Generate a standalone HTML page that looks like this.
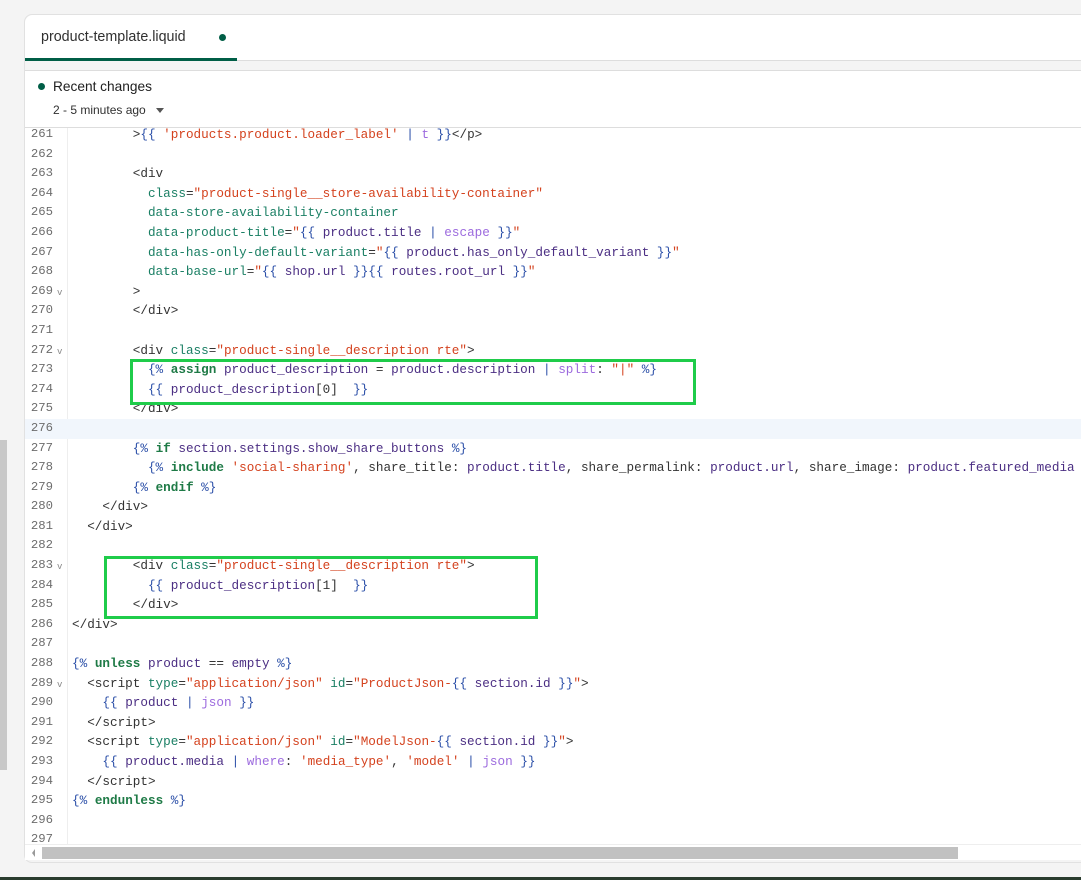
<!DOCTYPE html>
<html><head><meta charset="utf-8"><style>
*{margin:0;padding:0;box-sizing:border-box}
body{width:1081px;height:880px;background:#f4f4f4;position:relative;overflow:hidden;font-family:"Liberation Sans",sans-serif}
.panel{position:absolute;left:24px;top:14px;width:1070px;height:849px;background:#f4f4f4;border:1px solid #e1e1e1;border-right:none;border-radius:8px 0 0 8px}
.tabbar{position:absolute;left:0;top:0;right:0;height:46px;background:#fff;border-bottom:1px solid #ddd;border-radius:8px 0 0 0}
.tab{position:absolute;left:0;top:0;width:212px;height:46px;border-bottom:3px solid #005e46;font-size:14.3px;color:#303030;padding:14px 0 0 16px}
.tab .dot{position:absolute;left:194px;top:19px;width:7px;height:7px;border-radius:50%;background:#005e46}
.recent{position:absolute;left:0;top:55px;right:0;height:58px;background:#fff;border-top:1px solid #ddd;border-bottom:1px solid #ddd}
.recent .dot{position:absolute;left:13px;top:12px;width:7px;height:7px;border-radius:50%;background:#005e46}
.recent .t1{position:absolute;left:28px;top:8px;font-size:13.7px;color:#202020}
.recent .t2{position:absolute;left:28px;top:32px;font-size:12px;color:#303030}
.recent .tri{position:absolute;left:131px;top:37px;width:0;height:0;border-left:4.5px solid transparent;border-right:4.5px solid transparent;border-top:5px solid #555}
.code{position:absolute;left:0;top:113px;right:0;height:716px;background:#fff;overflow:hidden}
.gut{position:absolute;left:42px;top:0;bottom:0;width:1px;background:#eee}
.lines{position:absolute;left:0;top:-3px;right:0;font-family:"Liberation Mono",monospace;font-size:12.66px}
.l{height:19.6px;line-height:19.6px;white-space:pre;position:relative}
.n{position:absolute;left:0;width:28px;text-align:right;color:#6d6d6d;font-size:12.3px}
.fold{position:absolute;left:32px;top:2px;color:#888;font-size:9px}
.c{position:absolute;left:47px;color:#333}
.hl{background:#f1f6fc}
.t{color:#333}.a{color:#1a7f64}.s{color:#d4421e}.b{color:#2b4fa8}.v{color:#4b2e83}.k{color:#1e7a46;font-weight:bold}.f{color:#9c6ade}
.box{position:absolute;border:3px solid #1fcc4a}
.hs{position:absolute;left:0;top:829px;right:0;height:16px;background:#fff;border-top:1px solid #eee}
.thumb{position:absolute;left:17px;top:2px;width:916px;height:12px;background:#c1c1c1}
.arr{position:absolute;left:7px;top:4px;width:0;height:0;border-top:4px solid transparent;border-bottom:4px solid transparent;border-right:3px solid #999}
.vs{position:absolute;left:0;top:440px;width:7px;height:330px;background:#c8c8c8}
.bot{position:absolute;left:0;top:877px;width:1081px;height:3px;background:#2a3c2e}
</style></head><body>
<div class="vs"></div>
<div class="panel">
 <div class="tabbar"><div class="tab">product-template.liquid<span class="dot"></span></div></div>
 <div class="recent"><span class="dot"></span><span class="t1">Recent changes</span><span class="t2">2 - 5 minutes ago</span><span class="tri"></span></div>
 <div class="code">
  <div class="gut"></div>
  <div class="lines">
<div class="l"><span class="n">261</span><span class="c">        &gt;<span class="b">{{</span> <span class="s">'products.product.loader_label'</span> <span class="b">|</span> <span class="f">t</span> <span class="b">}}</span>&lt;/p&gt;</span></div>
<div class="l"><span class="n">262</span></div>
<div class="l"><span class="n">263</span><span class="c">        &lt;div</span></div>
<div class="l"><span class="n">264</span><span class="c">          <span class="a">class</span>=<span class="s">"product-single__store-availability-container"</span></span></div>
<div class="l"><span class="n">265</span><span class="c">          <span class="a">data-store-availability-container</span></span></div>
<div class="l"><span class="n">266</span><span class="c">          <span class="a">data-product-title</span>=<span class="s">"</span><span class="b">{{</span> <span class="v">product.title</span> <span class="b">|</span> <span class="f">escape</span> <span class="b">}}</span><span class="s">"</span></span></div>
<div class="l"><span class="n">267</span><span class="c">          <span class="a">data-has-only-default-variant</span>=<span class="s">"</span><span class="b">{{</span> <span class="v">product.has_only_default_variant</span> <span class="b">}}</span><span class="s">"</span></span></div>
<div class="l"><span class="n">268</span><span class="c">          <span class="a">data-base-url</span>=<span class="s">"</span><span class="b">{{</span> <span class="v">shop.url</span> <span class="b">}}{{</span> <span class="v">routes.root_url</span> <span class="b">}}</span><span class="s">"</span></span></div>
<div class="l"><span class="n">269</span><span class="fold">v</span><span class="c">        &gt;</span></div>
<div class="l"><span class="n">270</span><span class="c">        &lt;/div&gt;</span></div>
<div class="l"><span class="n">271</span></div>
<div class="l"><span class="n">272</span><span class="fold">v</span><span class="c">        &lt;div <span class="a">class</span>=<span class="s">"product-single__description rte"</span>&gt;</span></div>
<div class="l"><span class="n">273</span><span class="c">          <span class="b">{%</span> <span class="k">assign</span> <span class="v">product_description</span> = <span class="v">product.description</span> <span class="b">|</span> <span class="f">split</span>: <span class="s">"|"</span> <span class="b">%}</span></span></div>
<div class="l"><span class="n">274</span><span class="c">          <span class="b">{{</span> <span class="v">product_description</span>[0]  <span class="b">}}</span></span></div>
<div class="l"><span class="n">275</span><span class="c">        &lt;/div&gt;</span></div>
<div class="l hl"><span class="n">276</span></div>
<div class="l"><span class="n">277</span><span class="c">        <span class="b">{%</span> <span class="k">if</span> <span class="v">section.settings.show_share_buttons</span> <span class="b">%}</span></span></div>
<div class="l"><span class="n">278</span><span class="c">          <span class="b">{%</span> <span class="k">include</span> <span class="s">'social-sharing'</span>, share_title: <span class="v">product.title</span>, share_permalink: <span class="v">product.url</span>, share_image: <span class="v">product.featured_media</span></span></div>
<div class="l"><span class="n">279</span><span class="c">        <span class="b">{%</span> <span class="k">endif</span> <span class="b">%}</span></span></div>
<div class="l"><span class="n">280</span><span class="c">    &lt;/div&gt;</span></div>
<div class="l"><span class="n">281</span><span class="c">  &lt;/div&gt;</span></div>
<div class="l"><span class="n">282</span></div>
<div class="l"><span class="n">283</span><span class="fold">v</span><span class="c">        &lt;div <span class="a">class</span>=<span class="s">"product-single__description rte"</span>&gt;</span></div>
<div class="l"><span class="n">284</span><span class="c">          <span class="b">{{</span> <span class="v">product_description</span>[1]  <span class="b">}}</span></span></div>
<div class="l"><span class="n">285</span><span class="c">        &lt;/div&gt;</span></div>
<div class="l"><span class="n">286</span><span class="c">&lt;/div&gt;</span></div>
<div class="l"><span class="n">287</span></div>
<div class="l"><span class="n">288</span><span class="c"><span class="b">{%</span> <span class="k">unless</span> <span class="v">product</span> == <span class="v">empty</span> <span class="b">%}</span></span></div>
<div class="l"><span class="n">289</span><span class="fold">v</span><span class="c">  &lt;script <span class="a">type</span>=<span class="s">"application/json"</span> <span class="a">id</span>=<span class="s">"ProductJson-</span><span class="b">{{</span> <span class="v">section.id</span> <span class="b">}}</span><span class="s">"</span>&gt;</span></div>
<div class="l"><span class="n">290</span><span class="c">    <span class="b">{{</span> <span class="v">product</span> <span class="b">|</span> <span class="f">json</span> <span class="b">}}</span></span></div>
<div class="l"><span class="n">291</span><span class="c">  &lt;/script&gt;</span></div>
<div class="l"><span class="n">292</span><span class="c">  &lt;script <span class="a">type</span>=<span class="s">"application/json"</span> <span class="a">id</span>=<span class="s">"ModelJson-</span><span class="b">{{</span> <span class="v">section.id</span> <span class="b">}}</span><span class="s">"</span>&gt;</span></div>
<div class="l"><span class="n">293</span><span class="c">    <span class="b">{{</span> <span class="v">product.media</span> <span class="b">|</span> <span class="f">where</span>: <span class="s">'media_type'</span>, <span class="s">'model'</span> <span class="b">|</span> <span class="f">json</span> <span class="b">}}</span></span></div>
<div class="l"><span class="n">294</span><span class="c">  &lt;/script&gt;</span></div>
<div class="l"><span class="n">295</span><span class="c"><span class="b">{%</span> <span class="k">endunless</span> <span class="b">%}</span></span></div>
<div class="l"><span class="n">296</span></div>
<div class="l"><span class="n">297</span></div>
  </div>
  <div class="box" style="left:105px;top:231px;width:566px;height:46px"></div>
  <div class="box" style="left:79px;top:428px;width:434px;height:63px"></div>
 </div>
 <div class="hs"><span class="arr"></span><div class="thumb"></div></div>
</div>
<div class="bot"></div>
</body></html>
